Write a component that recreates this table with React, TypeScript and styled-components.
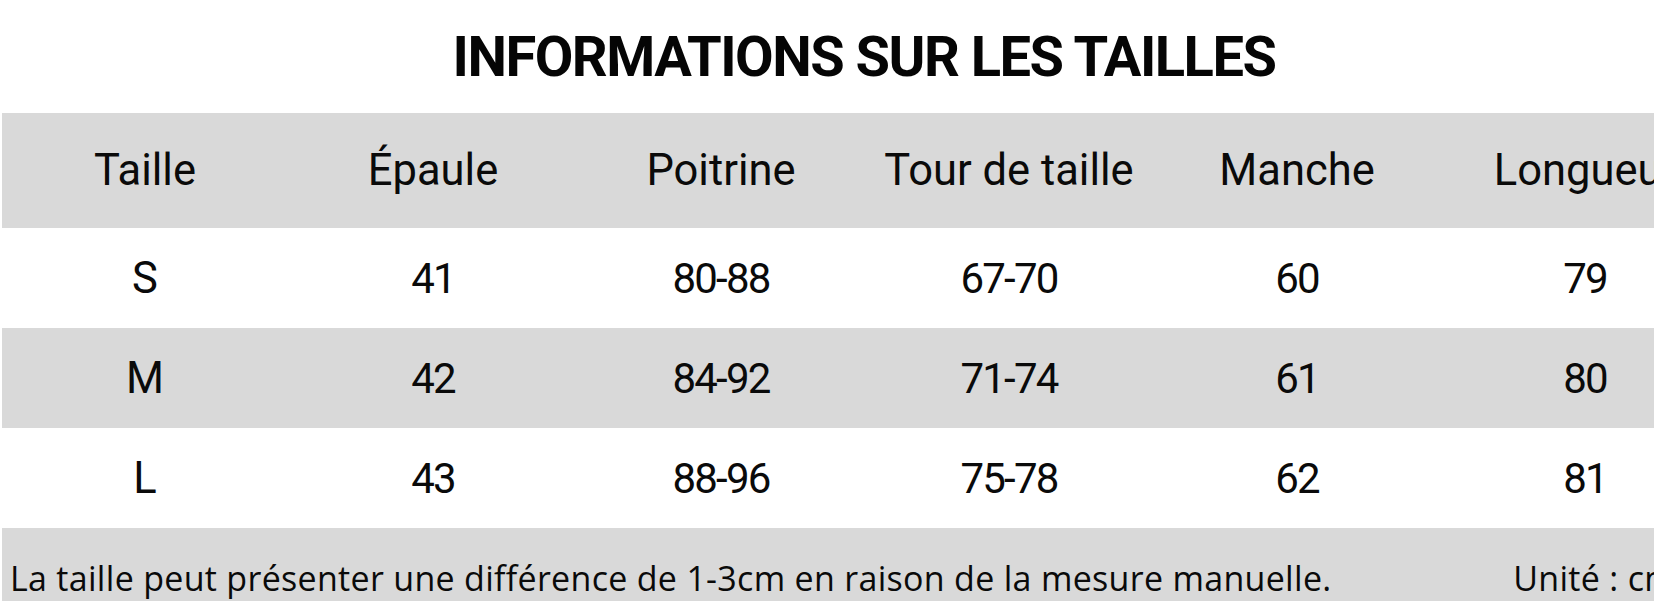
import React from 'react';
import styled, { createGlobalStyle } from 'styled-components';

const GlobalStyle = createGlobalStyle`
    html, body {
        margin: 0;
        padding: 0;
        background: #ffffff;
        overflow: hidden;
    }
`;

const Sheet = styled.div`
    width: 1728px;
    background: #ffffff;
    color: #0a0a0a;
    font-family: Roboto, "Open Sans", sans-serif;
`;

const Title = styled.h1`
    margin: 0;
    height: 113px;
    display: flex;
    align-items: center;
    justify-content: center;
    font-family: Roboto, sans-serif;
    font-weight: 700;
    font-size: 56px;
    letter-spacing: -1.5px;
    color: #050505;
`;

const Row = styled.div<{ $shade: boolean; $tall?: boolean }>`
    display: grid;
    grid-template-columns: repeat(6, 288px);
    height: ${p => (p.$tall ? '115px' : '100px')};
    margin-left: 2px;
    background: ${p => (p.$shade ? '#d9d9d9' : '#ffffff')};
`;

const Cell = styled.div<{ $num?: boolean }>`
    display: flex;
    align-items: center;
    justify-content: center;
    margin-left: -2px;
    font-size: ${p => (p.$num ? '42px' : '43.5px')};
    letter-spacing: ${p => (p.$num ? '-1.8px' : '0')};
    white-space: nowrap;
`;

const Footer = styled.div`
    display: flex;
    align-items: center;
    justify-content: space-between;
    height: 100px;
    margin-left: 2px;
    padding: 0 52px 0 8px;
    background: #d9d9d9;
    font-family: "Open Sans", sans-serif;
    font-size: 34px;
    letter-spacing: 0.3px;
`;

const Note = styled.span`
    white-space: nowrap;
`;

const headers = ['Taille', 'Épaule', 'Poitrine', 'Tour de taille', 'Manche', 'Longueur'];

const rows = [
    ['S', '41', '80-88', '67-70', '60', '79'],
    ['M', '42', '84-92', '71-74', '61', '80'],
    ['L', '43', '88-96', '75-78', '62', '81'],
];

export default function App() {
    return (
        <Sheet>
            <GlobalStyle />
            <Title>INFORMATIONS SUR LES TAILLES</Title>
            <Row $shade $tall>
                {headers.map(h => <Cell key={h}>{h}</Cell>)}
            </Row>
            {rows.map((r, i) => (
                <Row key={r[0]} $shade={i % 2 === 1}>
                    {r.map((v, j) => <Cell key={j} $num={j > 0}>{v}</Cell>)}
                </Row>
            ))}
            <Footer>
                <Note>La taille peut présenter une différence de 1-3cm en raison de la mesure manuelle.</Note>
                <Note>Unité : cm</Note>
            </Footer>
        </Sheet>
    );
}
